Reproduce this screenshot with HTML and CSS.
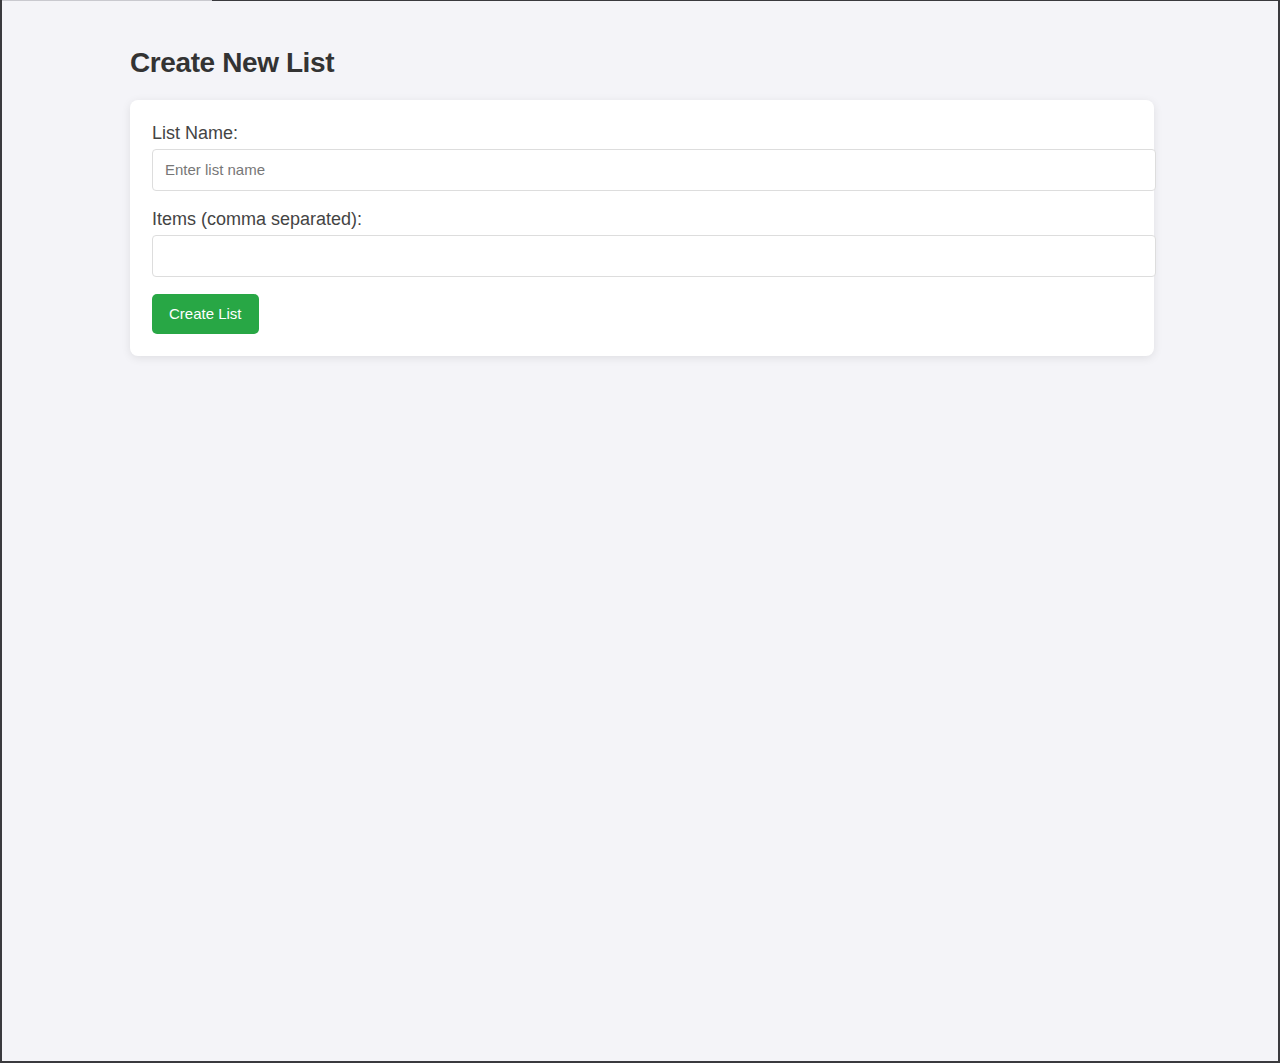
FILE: index.html
```html
<!DOCTYPE html>
<html lang="en">
<head>
<meta charset="utf-8">
<title>Create New List</title>
<link rel="stylesheet" href="styles.css">
</head>
<body>
<div class="frame"><span class="frame-tab"></span></div>
<main class="container">
  <h1 class="page-title">Create New List</h1>
  <form class="card">
    <div class="form-group">
      <label class="form-label" for="list-name">List Name:</label>
      <input class="form-input" id="list-name" type="text" placeholder="Enter list name">
    </div>
    <div class="form-group">
      <label class="form-label" for="list-items">Items (comma separated):</label>
      <input class="form-input" id="list-items" type="text">
    </div>
    <button class="btn-primary" type="button">Create List</button>
  </form>
</main>
</body>
</html>
```

FILE: styles.css
```css
html, body {
  margin: 0;
  padding: 0;
}

body {
  background: #f4f4f8;
  font-family: "Liberation Sans", Arial, Helvetica, sans-serif;
  color: #333;
  min-height: 1063px;
  padding-left: 4px;
  box-sizing: border-box;
}

.frame {
  position: fixed;
  inset: 0;
  border-left: 2px solid #3a3a3e;
  border-right: 2px solid #3a3a3e;
  border-bottom: 2px solid #3a3a3e;
  border-top: 1px solid #3a3a3e;
  pointer-events: none;
  z-index: 10;
}

.frame-tab {
  position: absolute;
  top: -1px;
  left: 0;
  width: 210px;
  height: 1px;
  background: #c9c9cf;
}

.container {
  max-width: 1024px;
  margin: 0 auto;
}

.page-title {
  margin: 0;
  padding: 47px 0 21px;
  font-size: 28px;
  line-height: 32px;
  font-weight: 700;
  letter-spacing: -0.4px;
  color: #333;
}

.card {
  background: #fff;
  border-radius: 8px;
  padding: 22px;
  box-shadow: 0 2px 10px rgba(0, 0, 0, 0.09);
}

.form-group {
  margin-bottom: 17px;
}

.form-label {
  display: block;
  font-size: 18px;
  line-height: 22px;
  margin-bottom: 5px;
  color: #444;
}

.form-input {
  display: block;
  width: calc(100% + 24px);
  box-sizing: border-box;
  padding: 12px;
  font-family: "Liberation Sans", Arial, Helvetica, sans-serif;
  font-size: 15px;
  line-height: 16px;
  border: 1px solid #ddd;
  border-radius: 4px;
  background: #fff;
  color: #333;
  outline: none;
}

.form-input::placeholder {
  color: #777;
}

.btn-primary {
  display: block;
  background: #28a745;
  color: #fff;
  border: none;
  border-radius: 5px;
  padding: 11px 17px;
  font-family: "Liberation Sans", Arial, Helvetica, sans-serif;
  font-size: 15px;
  line-height: 18px;
  cursor: pointer;
}
```
